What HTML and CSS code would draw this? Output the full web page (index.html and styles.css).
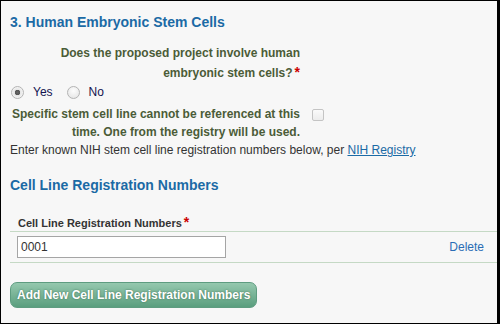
FILE: index.html
```html
<!DOCTYPE html>
<html lang="en">
<head>
    <meta charset="UTF-8">
    <title>Human Embryonic Stem Cells</title>
    <link rel="stylesheet" href="styles.css">
</head>
<body>
    <div class="frame">
        <h2 class="section-title">3. Human Embryonic Stem Cells</h2>

        <div class="field-row">
            <label class="field-label">Does the proposed project involve human embryonic stem cells?<span class="req">*</span></label>
        </div>
        <div class="radio-row">
            <label class="radio"><input type="radio" name="hesc" checked>Yes</label>
            <label class="radio"><input type="radio" name="hesc">No</label>
        </div>

        <div class="field-row check-row">
            <label class="field-label" for="noLine">Specific stem cell line cannot be referenced at this time. One from the registry will be used.</label>
            <input type="checkbox" id="noLine" class="check">
        </div>
        <p class="hint">Enter known NIH stem cell line registration numbers below, per <a href="#">NIH Registry</a></p>

        <h3 class="sub-title">Cell Line Registration Numbers</h3>

        <table class="grid">
            <thead>
                <tr>
                    <th>Cell Line Registration Numbers<span class="req">*</span></th>
                    <th></th>
                </tr>
            </thead>
            <tbody>
                <tr>
                    <td><input type="text" class="text-input" value="0001"></td>
                    <td class="action"><a href="#">Delete</a></td>
                </tr>
            </tbody>
        </table>

        <button class="add-btn">Add New Cell Line Registration Numbers</button>
    </div>
</body>
</html>
```

FILE: styles.css
```css
html, body {
    margin: 0;
    padding: 0;
    background: #fff;
}

.frame {
    box-sizing: border-box;
    width: 500px;
    height: 324px;
    border: 1px solid #000;
    border-right-width: 3px;
    background-color: #f7f7f7;
    padding: 0 0 0 9px;
    font-family: Arial, "Liberation Sans", sans-serif;
    font-size: 12px;
    color: #333;
    overflow: hidden;
}

.section-title {
    margin: 0;
    padding-top: 13px;
    font-size: 14px;
    line-height: 17px;
    color: #1b6aa5;
}

.field-row {
    display: flex;
    align-items: flex-start;
    margin-top: 13px;
}

.field-label {
    width: 290px;
    text-align: right;
    font-weight: bold;
    line-height: 19px;
    color: #4b5c38;
}

.req {
    color: #c00;
    font-size: 14px;
    margin-left: 2px;
}

.radio-row {
    display: flex;
    gap: 13px;
    line-height: 18px;
    color: #141450;
}

.radio {
    display: flex;
    align-items: center;
}

.radio input {
    appearance: none;
    -webkit-appearance: none;
    box-sizing: border-box;
    margin: 0 9px 0 1px;
    width: 13px;
    height: 13px;
    border: 1px solid #b4b4b4;
    border-radius: 50%;
    background: radial-gradient(circle at 50% 35%, #fdfdfd, #e2e2e2);
}

.radio input:checked {
    background: radial-gradient(circle, #666 0, #555 2.5px, #e6e6e6 3px, #f6f6f6 6px);
}

.check-row {
    margin-top: 4px;
}

.check-row .field-label {
    line-height: 18px;
}

.check {
    appearance: none;
    -webkit-appearance: none;
    box-sizing: border-box;
    margin: 4px 0 0 12px;
    width: 12px;
    height: 12px;
    border: 1px solid #c4c4c4;
    border-radius: 2px;
    background: linear-gradient(#fafafa, #ececec);
}

.hint {
    margin: 0;
    line-height: 18px;
}

.hint a {
    color: #1b6aa5;
    text-decoration: underline;
}

.sub-title {
    margin: 18px 0 0;
    font-size: 14px;
    line-height: 16px;
    color: #1b6aa5;
}

.grid {
    margin-top: 18px;
    width: 488px;
    border-collapse: collapse;
}

.grid th {
    text-align: left;
    font-weight: bold;
    font-size: 11px;
    color: #333;
    padding: 3px 8px 1px 8px;
    border-bottom: 1px solid #c5d9c5;
}

.grid td {
    padding: 4px 8px 4px 7px;
    border-bottom: 1px solid #c5d9c5;
}

.text-input {
    display: block;
    box-sizing: border-box;
    width: 209px;
    height: 22px;
    border: 1px solid #a5a5a5;
    padding: 0 3px;
    font: 12px Arial, "Liberation Sans", sans-serif;
    color: #333;
    background: #fff;
}

.grid .action {
    text-align: right;
    padding-right: 14px;
}

.action a {
    color: #2a6db5;
    text-decoration: none;
}

.add-btn {
    margin-top: 19px;
    height: 26px;
    padding: 0 6px;
    border: 1px solid #5e9c80;
    border-radius: 7px;
    background: linear-gradient(#95c8ae, #5a9e7e);
    color: #fff;
    font: bold 12px Arial, "Liberation Sans", sans-serif;
    text-shadow: 0 0 2px #3d6e55;
}
```
